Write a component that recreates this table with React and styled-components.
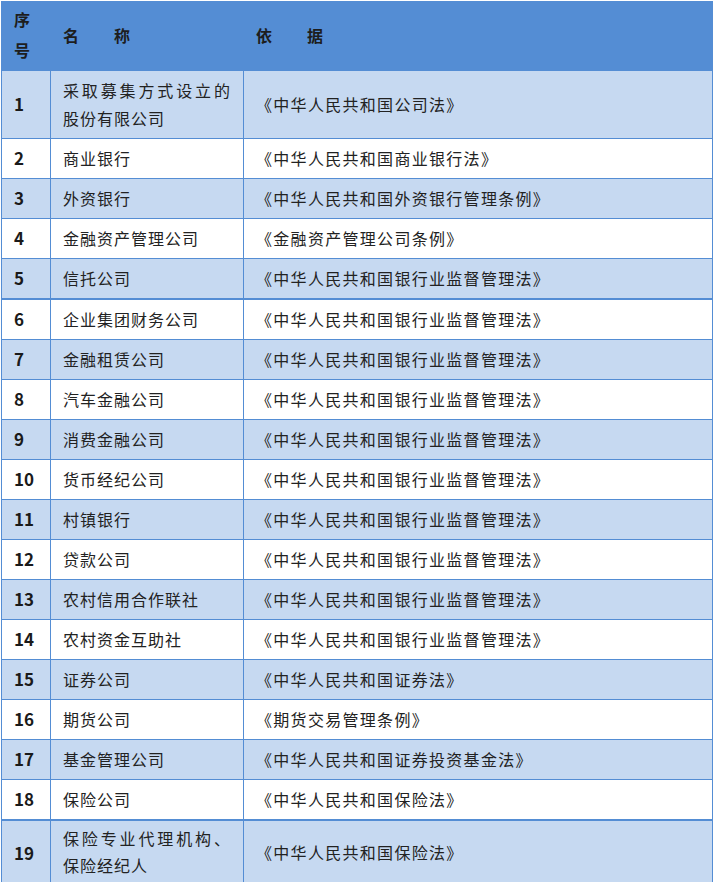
import React from "react";
import styled, { createGlobalStyle } from "styled-components";

const Global = createGlobalStyle`
  html, body { margin: 0; padding: 0; background: #ffffff; }
  body { font-family: "Noto Sans CJK SC", "Noto Sans", sans-serif; }
`;

const Page = styled.div`
  padding: 1px 1px 0 1px;
  width: 713px;
  box-sizing: border-box;
`;

const Table = styled.table`
  width: 711px;
  border-collapse: collapse;
  table-layout: fixed;
  color: #222;
  font-size: 16px;
`;

const Col = styled.col`
  width: ${(p) => p.$w}px;
`;

const HeadCell = styled.th`
  background: #548dd4;
  border: 1px solid #548dd4;
  height: 66px;
  padding: 0 12px 2px;
  text-align: left;
  font-weight: 700;
  font-size: 16px;
  letter-spacing: 1px;
  line-height: 31px;
  color: #1d1d1d;
  white-space: pre;
`;

const NumHead = styled(HeadCell)`
  white-space: normal;
  padding: 0 11px 2px 12px;
`;

const Row = styled.tr`
  background: ${(p) => (p.$shaded ? "#c6d9f1" : "#ffffff")};
  border-bottom: ${(p) => (p.$thick ? 2 : 1)}px solid #548dd4;
`;

const Cell = styled.td`
  border-left: 1px solid #548dd4;
  border-right: 1px solid #548dd4;
  height: ${(p) => p.$h || 37}px;
  padding: 0 12px 2px;
  vertical-align: middle;
  line-height: ${(p) => p.$lh || 28}px;
`;

const NumCell = styled(Cell)`
  font-weight: 700;
  font-size: 17px;
  color: #1a1a1a;
`;

const NameCell = styled(Cell)`
  letter-spacing: 1px;
  text-align: justify;
`;

const LawCell = styled(Cell)`
  letter-spacing: 1.3px;
`;

const rows = [
  ["1", "采取募集方式设立的股份有限公司", "《中华人民共和国公司法》", 65, 28],
  ["2", "商业银行", "《中华人民共和国商业银行法》"],
  ["3", "外资银行", "《中华人民共和国外资银行管理条例》"],
  ["4", "金融资产管理公司", "《金融资产管理公司条例》"],
  ["5", "信托公司", "《中华人民共和国银行业监督管理法》"],
  ["6", "企业集团财务公司", "《中华人民共和国银行业监督管理法》"],
  ["7", "金融租赁公司", "《中华人民共和国银行业监督管理法》"],
  ["8", "汽车金融公司", "《中华人民共和国银行业监督管理法》"],
  ["9", "消费金融公司", "《中华人民共和国银行业监督管理法》"],
  ["10", "货币经纪公司", "《中华人民共和国银行业监督管理法》"],
  ["11", "村镇银行", "《中华人民共和国银行业监督管理法》"],
  ["12", "贷款公司", "《中华人民共和国银行业监督管理法》"],
  ["13", "农村信用合作联社", "《中华人民共和国银行业监督管理法》"],
  ["14", "农村资金互助社", "《中华人民共和国银行业监督管理法》"],
  ["15", "证券公司", "《中华人民共和国证券法》"],
  ["16", "期货公司", "《期货交易管理条例》"],
  ["17", "基金管理公司", "《中华人民共和国证券投资基金法》"],
  ["18", "保险公司", "《中华人民共和国保险法》"],
  ["19", "保险专业代理机构、保险经纪人", "《中华人民共和国保险法》", 62, 27],
];

const thickAfter = new Set(["5", "18"]);

export default function App() {
  return (
    <Page>
      <Global />
      <Table>
        <colgroup>
          <Col $w={49} />
          <Col $w={193} />
          <Col $w={469} />
        </colgroup>
        <thead>
          <tr>
            <NumHead>序号</NumHead>
            <HeadCell>{"名　　称"}</HeadCell>
            <HeadCell>{"依　　据"}</HeadCell>
          </tr>
        </thead>
        <tbody>
          {rows.map(([n, name, law, h, lh], i) => (
            <Row key={n} $shaded={i % 2 === 0} $thick={thickAfter.has(n)}>
              <NumCell $h={h} $lh={lh}>{n}</NumCell>
              <NameCell $h={h} $lh={lh}>{name}</NameCell>
              <LawCell $h={h} $lh={lh}>{law}</LawCell>
            </Row>
          ))}
        </tbody>
      </Table>
    </Page>
  );
}
